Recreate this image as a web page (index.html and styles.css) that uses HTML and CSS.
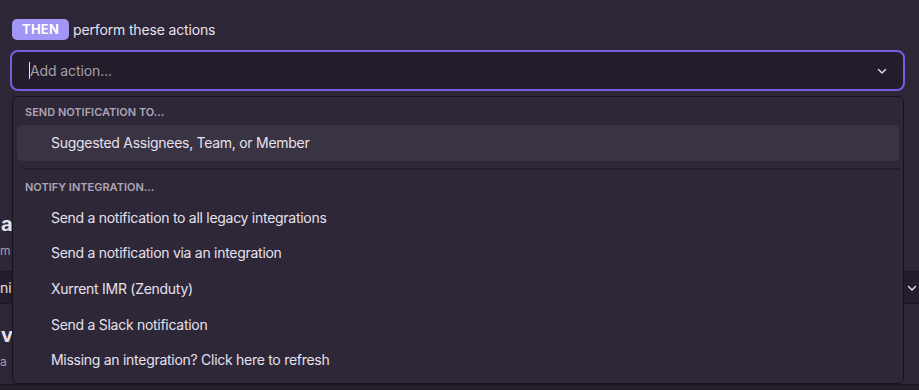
FILE: index.html
```html
<!DOCTYPE html>
<html lang="en">
<head>
  <meta charset="UTF-8" />
  <title>Alert actions</title>
  <link rel="stylesheet" href="styles.css">
</head>
<body>
  <div class="page">
    <div class="step-head">
      <span class="badge">THEN</span>
      <span class="step-text">perform these actions</span>
    </div>

    <div class="picker">
      <div class="control">
        <span class="caret"></span>
        <span class="placeholder">Add action...</span>
        <svg class="chevron" width="10" height="10" viewBox="0 0 10 10">
          <path d="M1.5 3.5 L5 7 L8.5 3.5" fill="none" stroke="#e6e1ec" stroke-width="1.4" stroke-linecap="round" stroke-linejoin="round"/>
        </svg>
      </div>

      <div class="menu">
        <div class="group-label">SEND NOTIFICATION TO...</div>
        <div class="option active">Suggested Assignees, Team, or Member</div>
        <div class="divider"></div>
        <div class="group-label">NOTIFY INTEGRATION...</div>
        <div class="option">Send a notification to all legacy integrations</div>
        <div class="option">Send a notification via an integration</div>
        <div class="option">Xurrent IMR (Zenduty)</div>
        <div class="option">Send a Slack notification</div>
        <div class="option">Missing an integration? Click here to refresh</div>
      </div>
    </div>

    <!-- rest of the form, mostly hidden under the open menu -->
    <div class="behind">
      <div class="behind-title">a</div>
      <div class="behind-sub">m</div>
      <div class="behind-select">
        <span>nin</span>
        <svg class="chevron" width="10" height="10" viewBox="0 0 10 10">
          <path d="M1.5 3.5 L5 7 L8.5 3.5" fill="none" stroke="#e6e1ec" stroke-width="1.4" stroke-linecap="round" stroke-linejoin="round"/>
        </svg>
      </div>
      <div class="behind-title second">vi</div>
      <div class="behind-sub">a</div>
    </div>
  </div>
  <div class="footer-band"></div>
</body>
</html>
```

FILE: styles.css
```css
* {
    margin: 0;
    padding: 0;
    box-sizing: border-box;
}
body {
    background: #2d2636;
    font-family: 'Inter', 'Noto Sans', sans-serif;
    color: #e6e1ec;
    width: 919px;
    height: 390px;
    overflow: hidden;
}
.page {
    height: 384px;
    overflow: hidden;
}
.step-head {
    display: flex;
    align-items: center;
    gap: 4px;
    padding: 19px 12px 0;
}
.badge {
    background: #a196f5;
    color: #ffffff;
    font-weight: 700;
    font-size: 13px;
    line-height: 21px;
    padding: 0 10px;
    border-radius: 5px;
    letter-spacing: 0.2px;
}
.step-text {
    font-size: 14px;
    letter-spacing: -0.15px;
    color: #e6e1ec;
}
.picker {
    position: relative;
    margin: 10px 14px 0 10px;
}
.control {
    display: flex;
    align-items: center;
    height: 41px;
    border: 2px solid #7b5ce0;
    border-radius: 8px;
    background: #231d2b;
    padding: 0 16px 0 17px;
}
.caret {
    width: 1px;
    height: 17px;
    background: #e6e1ec;
}
.placeholder {
    flex: 1;
    font-size: 14px;
    letter-spacing: -0.1px;
    color: #a39dac;
}
.menu {
    position: absolute;
    top: 46px;
    left: 2px;
    right: 1px;
    height: 288px;
    background: #2e2738;
    border: 1px solid #17131c;
    border-radius: 6px;
    padding: 2px 4px;
    z-index: 2;
}
.group-label {
    font-size: 11px;
    font-weight: 600;
    color: #aca5b6;
    padding: 7px 8px 6px;
    line-height: 13px;
}
.option {
    font-size: 14px;
    letter-spacing: -0.28px;
    line-height: 20px;
    padding: 8px 34px;
    border-radius: 5px;
    height: 35.7px;
}
.option.active {
    background: #3a3344;
}
.divider {
    height: 2px;
    background: #221d29;
    margin: 7px 0 4px 8px;
}
.behind {
    margin-top: 121px;
    margin-right: -8px;
}
.behind-title {
    font-size: 20px;
    font-weight: 700;
    padding-left: 1px;
    line-height: 24px;
}
.behind-title.second {
    margin-top: 19px;
}
.behind-sub {
    font-size: 12px;
    color: #a39dac;
    line-height: 14px;
    margin-top: 8px;
}
.behind-select {
    display: flex;
    align-items: center;
    justify-content: space-between;
    height: 33px;
    margin-top: 13px;
    background: #241e2c;
    border-top: 1px solid #1c1722;
    border-bottom: 1px solid #1c1722;
    font-size: 14px;
    padding: 0 10px 0 0;
}
.footer-band {
    height: 6px;
    background: #241f2b;
    border-top: 1px solid #1c1722;
}
```
